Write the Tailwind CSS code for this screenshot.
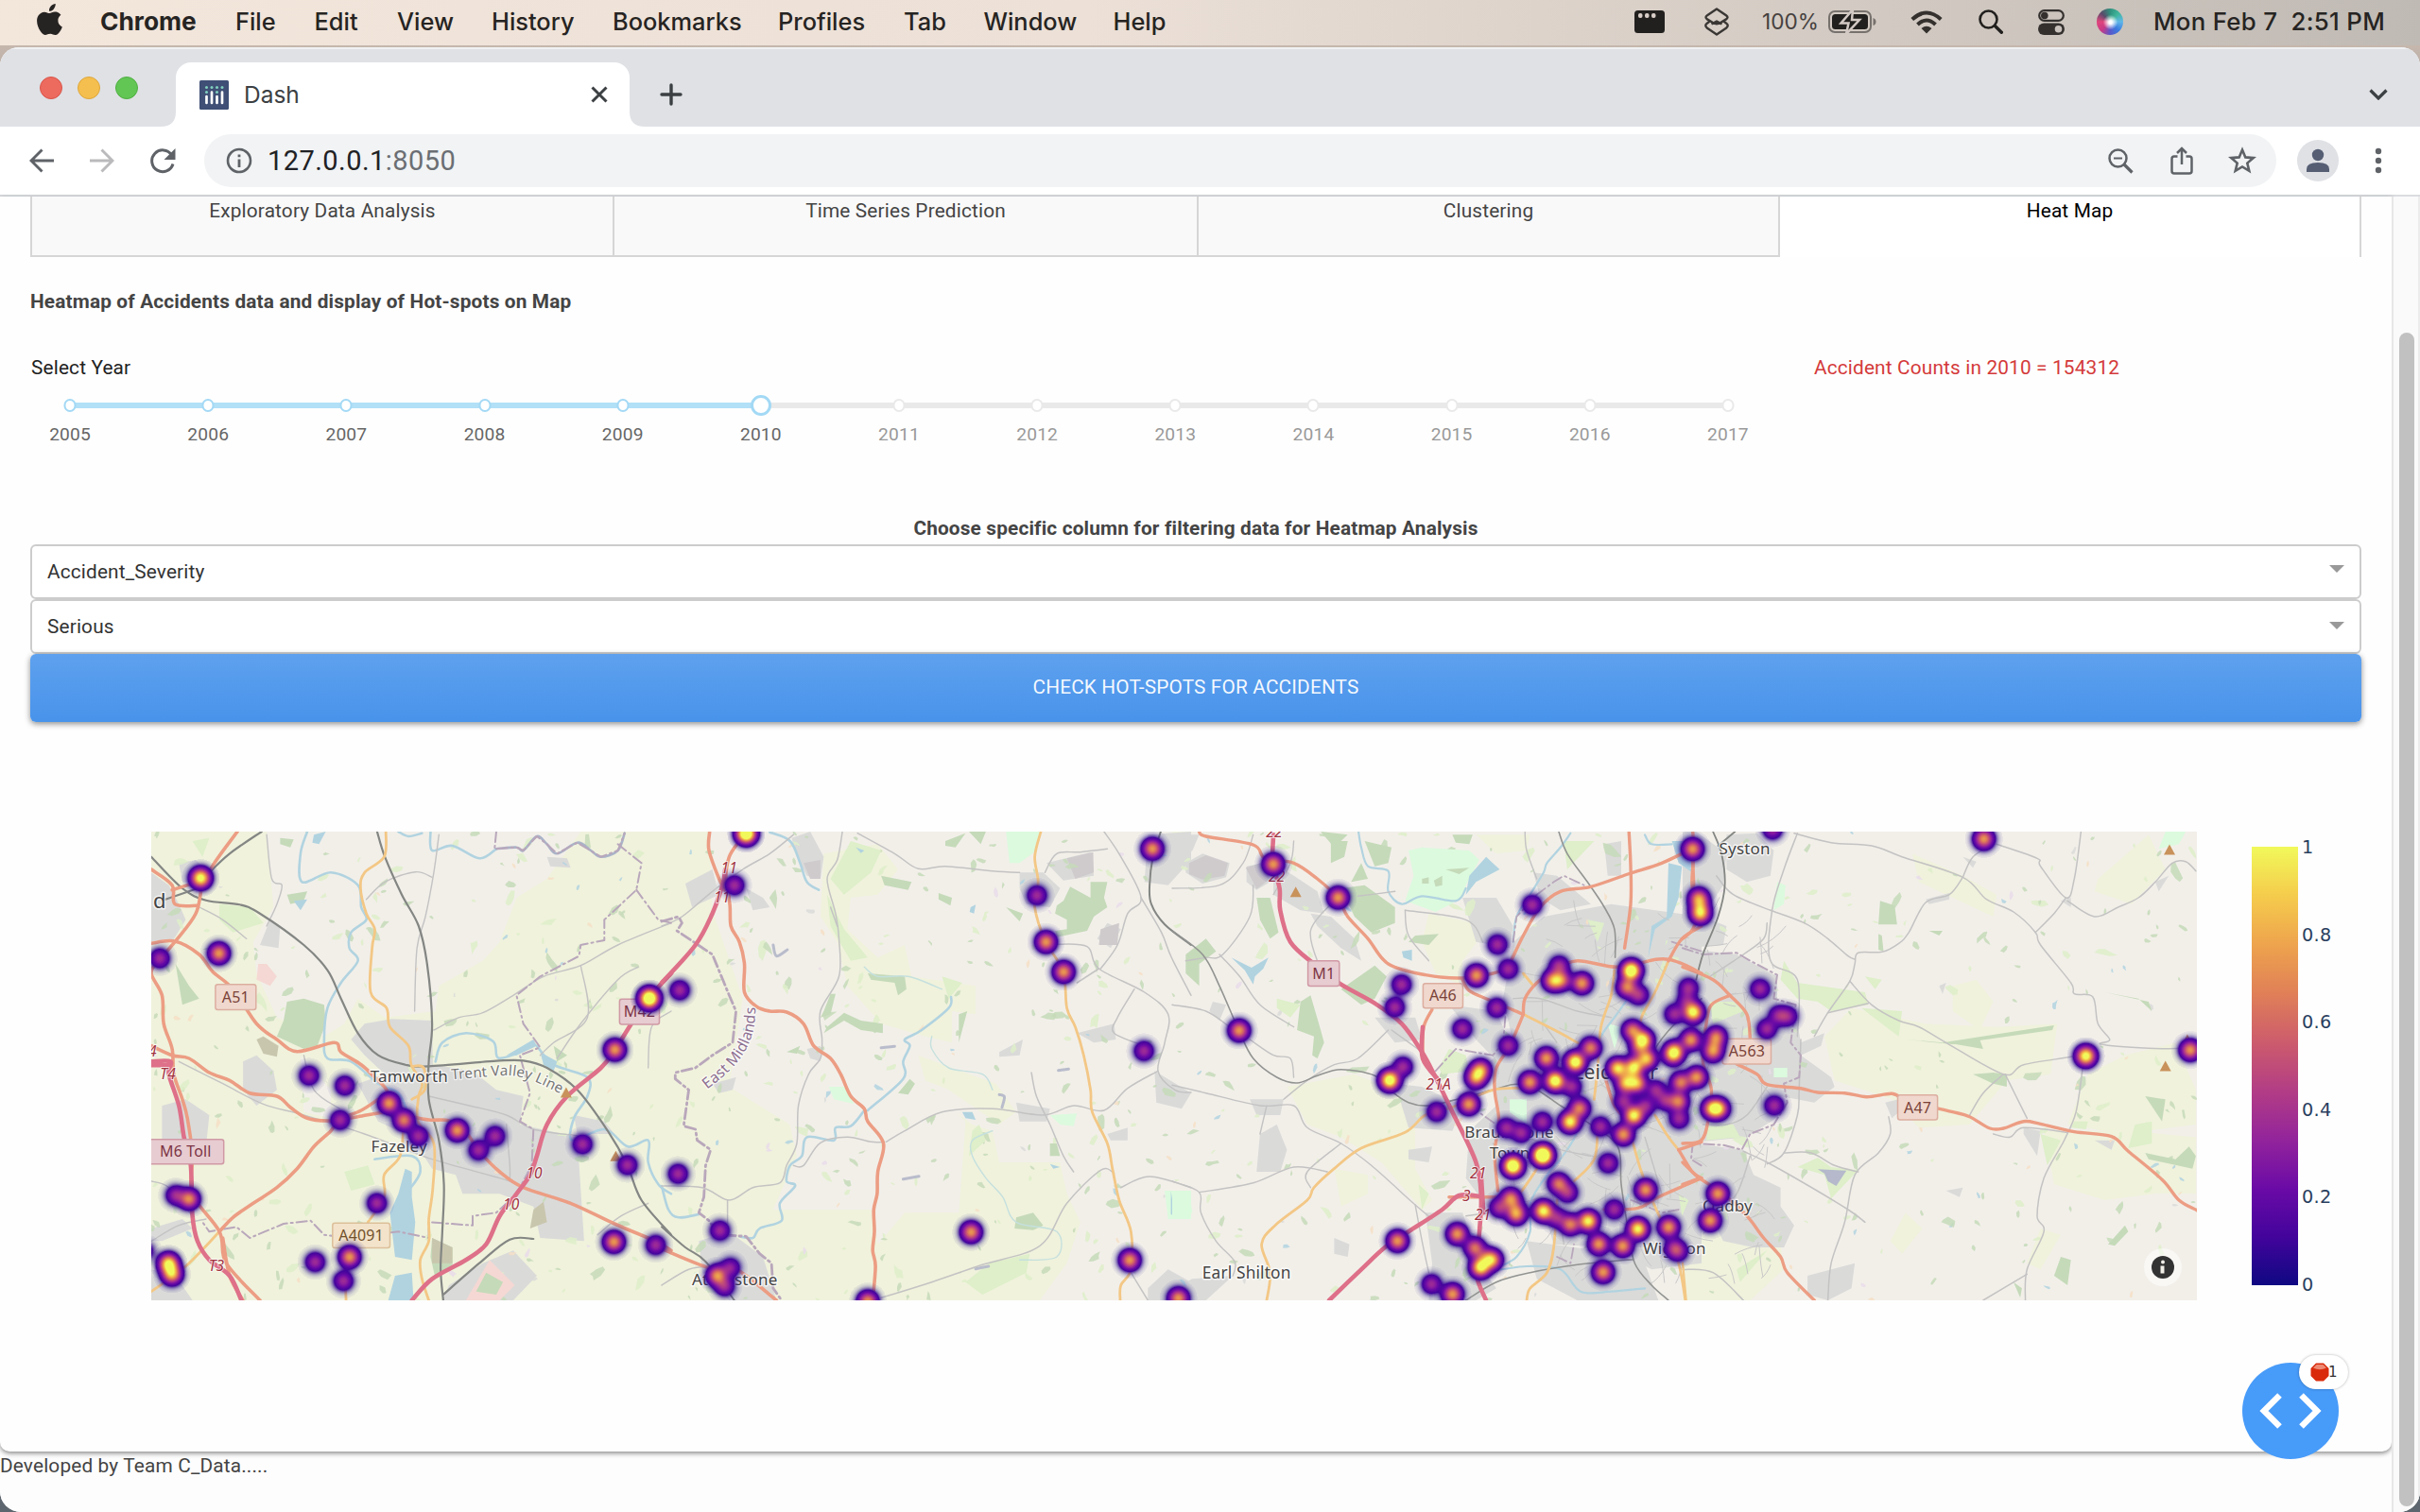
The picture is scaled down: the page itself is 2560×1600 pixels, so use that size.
<!DOCTYPE html>
<html lang="en">
<head>
<meta charset="utf-8">
<title>Dash</title>
<script src="https://cdn.jsdelivr.net/npm/@tailwindcss/browser@4"></script>
</head>
<body class="w-[2560px] h-[1600px] overflow-hidden bg-[#5d666e] font-['Inter',sans-serif] text-[#262422]">
<div class="flex flex-col h-[1600px] bg-linear-to-b from-[#d9c6b8] from-0% via-[#5d666e] via-20% to-[#5d666e]">

  <!-- macOS menu bar -->
  <header class="flex h-12 shrink-0 items-center bg-linear-to-r from-[#f3e6db] via-[#ece0d7] via-45% to-[#c0bab4] text-[25.4px] font-medium leading-[48px] pb-0.5">
    <svg class="ml-[38px] mr-[39px] w-[29px] h-[34px] -mt-1" viewBox="0 0 28 34"><path fill="#262422" d="M20.2 0c.2 2-.6 4-1.8 5.400-1.200 1.400-3 2.500-4.900 2.300-.2-1.900.7-3.900 1.800-5.200C16.500 1.100 18.600.1 20.200 0zM26.400 11.600c-.2.1-3.600 2.100-3.500 6.200 0 4.900 4.300 6.500 4.400 6.600 0 .1-.7 2.300-2.200 4.600-1.400 2-2.800 4-5 4-2.200.1-2.900-1.300-5.400-1.300s-3.300 1.200-5.400 1.300c-2.200.1-3.800-2.200-5.200-4.200C1.200 24.700-.9 17.500 1.900 12.700c1.400-2.400 3.900-3.900 6.600-4 2.100 0 4 1.400 5.300 1.400s3.600-1.700 6.100-1.500c1 0 4 .4 5.900 3.200z"/></svg>
    <span class="w-[143px] font-bold text-[26.3px]">Chrome</span>
    <span class="w-[83.500px]">File</span><span class="w-[87.500px]">Edit</span><span class="w-[100px]">View</span><span class="w-[128px]">History</span><span class="w-[175px]">Bookmarks</span><span class="w-[133px]">Profiles</span><span class="w-[84.500px]">Tab</span><span class="w-[137px]">Window</span><span>Help</span>
    <div class="ml-auto flex items-center pr-[37px]">
      <svg class="w-8 h-6 mr-[41px]" viewBox="0 0 32 24"><rect width="32" height="24" rx="3.500" fill="#22201e"/><g fill="#d8cdc7"><rect x="4" y="3" width="4.500" height="5" rx="2"/><rect x="11" y="3" width="4.500" height="5" rx="2"/><rect x="18" y="3" width="4.500" height="5" rx="2"/></g></svg>
      <svg class="w-7 h-[30px] mr-[34px]" viewBox="0 0 28 30" fill="none" stroke="#3a3734" stroke-width="2.400" stroke-linejoin="round"><path d="M14 1.500 4 8.200Q1 10.300 4 12.400L10 16Q14 18.500 18 16L24 12.400Q27 10.300 24 8.200ZM6.500 14.500 4 16.600Q0.500 19 4 21.800L14 28.500 24 21.800Q27.500 19 24 16.600L21.500 14.500M8.500 17.500 14 14.500 19.500 17.500"/></svg>
      <span class="text-[22.600px] font-normal text-[#45413e] mr-[10px]">100%</span>
      <svg class="w-[51px] h-6 mr-[36px]" viewBox="0 0 51 24"><rect x="1" y="1" width="44" height="22" rx="6" fill="none" stroke="#77716d" stroke-width="2"/><rect x="4" y="4" width="38" height="16" rx="3.500" fill="#22201e"/><path d="M47.500 8v8q3-1 3-4t-3-4z" fill="#77716d"/><path d="M26 -1 13.500 13.500H21.500L19 25 33 10H25z" fill="#22201e" stroke="#d3c9c4" stroke-width="2.500"/></svg>
      <svg class="w-[34px] h-[25px] mr-[38px]" viewBox="0 0 34 25" fill="none" stroke="#33302e" stroke-width="4"><path d="M1.800 9.500Q17-4.500 32.200 9.500M7.500 15Q17 6 26.500 15"/><path d="M17 24.500 11.500 19Q17 14.500 22.500 19z" fill="#33302e" stroke="none"/></svg>
      <svg class="w-[26px] h-[26px] mr-[37px]" viewBox="0 0 26 26" fill="none" stroke="#22201e" stroke-linecap="round"><circle cx="10.500" cy="10.500" r="9" stroke-width="2.600"/><path d="m17.500 17.500 6.800 6.800" stroke-width="3.400"/></svg>
      <svg class="w-7 h-[27px] mr-[34px]" viewBox="0 0 28 27"><rect x="1.200" y="1.200" width="25.600" height="10.600" rx="5.300" fill="none" stroke="#33302e" stroke-width="2.200"/><circle cx="6.800" cy="6.500" r="3.800" fill="#33302e"/><rect y="14.500" width="28" height="12.500" rx="6.200" fill="#33302e"/><circle cx="21.500" cy="20.700" r="3.800" fill="#c9c1bc"/></svg>
      <div class="w-7 h-7 rounded-full mr-[32px] bg-[radial-gradient(circle_at_52%_52%,#fff_0_8%,#ffffff00_38%),conic-gradient(from_0deg,#2f8f7c,#3fb59a,#5fb7e8,#3a7be0,#5b57c8,#c93a86,#e0457c,#5a4b6b,#2f8f7c)]"></div>
      <span class="whitespace-pre text-[25.800px] tracking-[.3px]">Mon Feb 7  2:51 PM</span>
    </div>
  </header>

  <!-- browser window -->
  <div class="mt-0.5 flex flex-col h-[1550px] rounded-t-[20px] rounded-b-[22px] overflow-hidden bg-white">
    <div class="flex h-[84px] shrink-0 bg-[#dfe1e5] border-t-2 border-[#f0f1f3] pt-3.5">
      <div class="flex gap-4 pl-[42px] pt-[15px] w-[186px]">
        <i class="w-6 h-6 rounded-full bg-[#ed6a5f] border border-[#d95549]"></i><i class="w-6 h-6 rounded-full bg-[#f5bf4f] border border-[#dda63a]"></i><i class="w-6 h-6 rounded-full bg-[#62c654] border border-[#4fae41]"></i>
      </div>
      <svg class="w-4 h-4 -ml-4 self-end" viewBox="0 0 16 16"><path d="M16 0V16H0Q16 16 16 0z" fill="#fff"/></svg>
      <div class="flex items-center w-[480px] h-[68px] rounded-t-[16px] bg-white pl-[25px] pr-[23px]">
        <svg class="w-[31px] h-[31px]" viewBox="0 0 31 31"><rect width="31" height="31" rx="1.500" fill="#3f4f75"/><g stroke="#fff" stroke-width="2.700" stroke-linecap="round"><path d="M7.500 17v7M13 12.500V24M18.500 17v7M24 12.500V24"/></g><g fill="#80cfbe"><circle cx="7.500" cy="7.500" r="1.500"/><circle cx="13" cy="7.500" r="1.500"/><circle cx="18.500" cy="7.500" r="1.500"/><circle cx="24" cy="7.500" r="1.500"/><circle cx="7.500" cy="12.500" r="1.500"/><circle cx="18.500" cy="12.500" r="1.500"/></g></svg>
        <span class="ml-4 text-[24.500px] leading-8 text-[#3c4043]">Dash</span>
        <svg class="ml-auto w-[18px] h-[18px]" viewBox="0 0 18 18" stroke="#3c4043" stroke-width="3"><path d="m1.500 1.500 15 15m0-15-15 15"/></svg>
      </div>
      <svg class="w-4 h-4 self-end" viewBox="0 0 16 16"><path d="M0 0V16H16Q0 16 0 0z" fill="#fff"/></svg>
      <svg class="ml-4 mt-[22px] w-6 h-6" viewBox="0 0 24 24" stroke="#3c4043" stroke-width="3.400" stroke-linecap="round"><path d="M12 2v20M2 12h20"/></svg>
      <svg class="ml-auto mr-[34px] mt-[28px] w-5 h-3" viewBox="0 0 20 12" fill="none" stroke="#3c4043" stroke-width="3.200"><path d="m1.500 1.500 8.500 8.500 8.500-8.500"/></svg>
    </div>
    <div class="flex h-[74px] shrink-0 items-center border-b-2 border-[#dadcdf] bg-white">
      <svg class="ml-[31px] w-[26px] h-[26px]" viewBox="0 0 26 26" fill="none" stroke="#5f6368" stroke-width="2.900"><path d="M13.500 1.500 2 13l11.500 11.500M2 13h24"/></svg>
      <svg class="ml-[38px] w-[26px] h-[26px]" viewBox="0 0 26 26" fill="none" stroke="#bababc" stroke-width="2.900"><path d="M12.500 1.500 24 13 12.500 24.500M24 13H0"/></svg>
      <svg class="ml-[37px] w-[28px] h-[28px]" viewBox="0 0 28 28"><path d="M23.600 8A11.400 11.400 0 1 0 25 17.500" fill="none" stroke="#5f6368" stroke-width="3"/><path d="M27.500 1v12h-12z" fill="#5f6368"/></svg>
      <div class="ml-[30px] flex items-center w-[2192px] h-14 rounded-full bg-[#f1f3f4] pl-[23px] pr-[21px]">
        <svg class="w-7 h-7" viewBox="0 0 28 28"><circle cx="14" cy="14" r="12" fill="none" stroke="#5f6368" stroke-width="2.600"/><path d="M12.600 12.500h2.800V21h-2.800zM12.600 7.500h2.800v2.800h-2.800z" fill="#5f6368"/></svg>
        <span class="ml-[16px] font-['Roboto',sans-serif] text-[29px] leading-9 tracking-[.45px] text-[#202124]">127.0.0.1<span class="text-[#6b6e73]">:8050</span></span>
        <svg class="ml-auto w-[27px] h-[27px] mr-[39px]" viewBox="0 0 27 27" fill="none" stroke="#5f6368" stroke-width="2.500"><circle cx="10.500" cy="10.500" r="9"/><path d="m17 17 8.500 8.500" stroke-width="3.200"/><path d="M6 10.500h9" stroke-width="2"/></svg>
        <svg class="w-[24px] h-[30px] mr-[37px] -mt-px" viewBox="0 0 24 30" fill="none" stroke="#5f6368" stroke-width="2.500"><path d="M7.500 10.500H4Q1.500 10.500 1.500 13V26Q1.500 28.500 4 28.500H20Q22.500 28.500 22.500 26V13Q22.500 10.500 20 10.500H16.500M12 19V2.500M7 7l5-5 5 5"/></svg>
        <svg class="w-[30px] h-[30px]" viewBox="0 0 30 30" fill="none" stroke="#5f6368" stroke-width="2.600"><path d="m15 3.500 3.300 7.900 8.500.7-6.500 5.500 2 8.300-7.300-4.400-7.300 4.400 2-8.300-6.500-5.500 8.500-.7z"/></svg>
      </div>
      <svg class="ml-[22px] w-11 h-11" viewBox="0 0 44 44"><circle cx="22" cy="22" r="22" fill="#dfe1e5"/><circle cx="22" cy="16" r="6.200" fill="#555e73"/><path d="M10 34v-3q0-7 12-7t12 7v3z" fill="#555e73"/></svg>
      <svg class="ml-[38px] w-2 h-[28px]" viewBox="0 0 8 28" fill="#5f6368"><circle cx="4" cy="4" r="3.200"/><circle cx="4" cy="14" r="3.200"/><circle cx="4" cy="24" r="3.200"/></svg>
    </div>

    <div class="relative flex grow min-h-0 bg-[#fdfdfd] font-['Roboto',sans-serif] text-[20.800px] tracking-[.16px] leading-8 text-[#444]">
      <main class="w-[2530px] h-full">
        <div class="h-[1328px] rounded-b-[10px] bg-[#fefefe] shadow-[0_2px_5px_rgba(0,0,0,.45)]">
          <!-- tabs -->
          <nav class="ml-8 w-[2466px] h-16 grid grid-cols-[616px_618px_617px_615px] text-center leading-[31px]">
            <div class="border-l-2 border-b-2 border-[#d6d6d6] bg-[#f9f9f9]">Exploratory Data Analysis</div>
            <div class="border-l-2 border-b-2 border-[#d6d6d6] bg-[#f9f9f9]">Time Series Prediction</div>
            <div class="border-x-2 border-b-2 border-[#d6d6d6] bg-[#f9f9f9]">Clustering</div>
            <div class="border-r-2 border-[#d6d6d6] bg-white text-black">Heat Map</div>
          </nav>
          <div class="px-8">
            <h2 class="mt-[31px] font-bold">Heatmap of Accidents data and display of Hot-spots on Map</h2>
            <div class="mt-[38px] flex text-[#222]">
              <div class="w-[1887px] pl-px">
                <div>Select Year</div>
                <div id="slider" class="mt-3 ml-[-32px] w-[1900px] grid grid-cols-13 text-center text-[19.200px]"></div>
              </div>
              <div class="text-[#d43a3a]">Accident Counts in 2010 = 154312</div>
            </div>
            <div class="mt-[67px] text-center font-bold">Choose specific column for filtering data for Heatmap Analysis</div>
            <div class="mt-px flex items-center justify-between h-[58px] rounded-[6px] border-2 border-[#ccc] bg-white pl-4 pr-4 text-[#333]"><span>Accident_Severity</span><svg class="w-4 h-2 -mt-1.5" viewBox="0 0 16 8"><path d="M0 0h16L8 8z" fill="#999"/></svg></div>
            <div class="flex items-center justify-between h-[58px] rounded-[6px] border-2 border-[#ccc] bg-white pl-4 pr-4 text-[#333]"><span>Serious</span><svg class="w-4 h-2 -mt-0.5" viewBox="0 0 16 8"><path d="M0 0h16L8 8z" fill="#999"/></svg></div>
            <button class="block w-full h-[72px] rounded-[6px] bg-linear-to-b from-[#5ea1ee] to-[#4893eb] text-white/95 shadow-[0_2px_6px_rgba(0,0,0,.45)] pb-[3px]">CHECK HOT-SPOTS FOR ACCIDENTS</button>
          </div>
          <!-- map and colour scale -->
          <div class="mt-[116px] ml-[160px] flex">
            <div class="relative w-[2164px] h-[496px] overflow-hidden bg-[#f2efe9]">
              <svg id="base" class="block w-[2164px] h-[496px]" viewBox="0 0 2164 496" fill="none" stroke-linejoin="round" stroke-linecap="round"></svg>
              <canvas id="heat" width="2164" height="496" class="absolute inset-0"></canvas>
              <svg class="absolute right-4 bottom-[15px] w-10 h-10" viewBox="0 0 40 40"><circle cx="20" cy="20" r="20" fill="#fff" fill-opacity=".55"/><circle cx="20" cy="20" r="12" fill="#333"/><circle cx="20" cy="14.500" r="2" fill="#f2efe9"/><path d="M17.500 18.500h4v8h-4z" fill="#f2efe9"/></svg>
            </div>
            <div class="ml-[58px] mt-4 w-[49px] h-[464px] bg-[linear-gradient(to_top,#0f0882,#43049c_11.1%,#6b0aa6_22.2%,#93249b_33.3%,#b33d85_44.4%,#cd5c6c_55.6%,#e08057_66.700%,#eea44d_77.800%,#f5cc4c_88.900%,#f1f95a)]"></div>
            <div class="ml-[4px] mt-px flex flex-col justify-between h-[495px] font-['DejaVu_Sans',sans-serif] text-[19.200px] tracking-[.4px] text-[#2a3f5f]"><span>1</span><span>0.8</span><span>0.6</span><span>0.4</span><span>0.2</span><span>0</span></div>
          </div>
        </div>
        <footer class="-mt-px">Developed by Team C_Data.....</footer>
      </main>
      <div class="w-[28px] border-l-2 border-[#e7e7e7] bg-[#fafafa] pl-1.5 pt-[144px]"><div class="w-4 h-[1242px] rounded-full bg-[#c1c1c1]"></div></div>
      <div class="w-0.5 bg-[#ececec]"></div>
      <!-- dev tools button -->
      <div class="absolute left-[2372px] top-[1234px] w-[102px] h-[102px] rounded-full bg-[#479bf9] flex items-center justify-center">
        <svg class="w-[66px] h-[38px]" viewBox="0 0 66 38" fill="none" stroke="#fff" stroke-width="6.500"><path d="M21.500 2.500 5 19 21.500 35.500M44.500 2.500 61 19 44.500 35.500"/></svg>
        <div class="absolute left-[60px] top-[-8px] w-[52px] h-9 rounded-full bg-white shadow-[0_0_3px_rgba(0,0,0,.3)] flex items-center pl-3">
          <svg class="w-5 h-5" viewBox="0 0 20 20"><path d="M6 .5h8L19.500 6v8L14 19.500H6L.5 14V6z" fill="#d92b0c"/><path d="M6.500 2h7L17 5.500Q10 9 3 5.500z" fill="#ee8a74"/></svg>
          <span class="-ml-px text-[15px] leading-5 font-['DejaVu_Sans',sans-serif] text-[#333]">1</span>
        </div>
      </div>
    </div>
  </div>
</div>

<script>
// Year slider
const slider = document.getElementById('slider');
for (let y = 2005; y <= 2017; y++) {
  const on = y <= 2010, cur = y === 2010;
  const bar = on ? 'bg-[#b2e0f7]' : 'bg-[#e9e9e9]';
  const rBar = y < 2010 ? 'bg-[#b2e0f7]' : 'bg-[#e9e9e9]';
  const dot = cur ? 'w-[22px] h-[22px] border-[3px] border-[#a3d9f5]' : on ? 'w-[13px] h-[14px] border-[2.500px] border-[#a3d9f5]' : 'w-[13px] h-[14px] border-[2.500px] border-[#e9e9e9]';
  slider.insertAdjacentHTML('beforeend',
    `<div><div class="relative flex h-6 items-center"><i class="grow h-1.5 ${y > 2005 ? bar : ''}"></i><i class="grow h-1.5 ${y < 2017 ? rBar : ''}"></i><b class="absolute left-1/2 top-1/2 -translate-1/2 rounded-full bg-white ${dot}"></b></div><div class="mt-[3px] ${on ? 'text-[#666]' : 'text-[#999]'}">${y}</div></div>`);
}

// Base map: four survey sheets, each with its own origin and 2.8 x 3 units per pixel
const ox = {A: -10, B: 540, C: 1080, D: 1620};
const svg = document.getElementById('base');
let out = '';
const pts = (t, s) => s.trim().split(/\s+/).map(p => { const [x, y] = p.split(','); return [ox[t] + x / 2.8, y / 3 - 10]; });
const r = n => n.toFixed(1);
function curve(p) {
  let d = `M${r(p[0][0])} ${r(p[0][1])}`;
  for (let i = 0; i < p.length - 1; i++) {
    const a = p[i - 1] || p[i], b = p[i], c = p[i + 1], e = p[i + 2] || c;
    d += `C${r(b[0] + (c[0] - a[0]) / 6)} ${r(b[1] + (c[1] - a[1]) / 6)} ${r(c[0] - (e[0] - b[0]) / 6)} ${r(c[1] - (e[1] - b[1]) / 6)} ${r(c[0])} ${r(c[1])}`;
  }
  return d;
}
const area = (fill, t, ...list) => list.forEach(s => { out += `<path d="M${pts(t, s).map(p => r(p[0]) + ' ' + r(p[1])).join('L')}Z" fill="${fill}"/>`; });
const line = (color, w, t, ...list) => list.forEach(s => { out += `<path d="${curve(pts(t, s))}" stroke="${color}" stroke-width="${w}"/>`; });
const farm = '#f0f2dc', town = '#dadad9', wood = '#c5dab9', grass = '#deefc9', golf = '#dcfade', water = '#b1d3e0', land = '#f2efe9';

area(farm, 'A', '28,30 1568,30 1568,1520 28,1520');
area(land, 'A', '370,30 1300,30 1200,180 1110,240 1060,380 1010,440 880,520 870,600 720,620 640,560 600,640 540,680 400,620 340,480 330,380 390,270', '470,740 560,850 560,940 480,920');
area(farm, 'B', '0,30 140,30 150,280 240,560 200,840 380,960 400,1060 330,1230 620,1230 640,1340 720,1240 880,1240 900,950 870,920 920,960 980,980 1000,1080 1180,1080 1200,1180 1240,1270 1200,1400 1120,1518 0,1518', '480,100 640,70 700,150 640,230 560,240 550,340 640,430 720,390 740,490 930,520 930,610 860,600 860,700 780,680 650,640 550,520 520,380 470,300', '760,740 860,780 990,830 1050,920 1000,960 850,850 780,820');
area(farm, 'C', '340,840 540,800 680,860 720,960 720,1100 770,1200 740,1230 620,1080 500,1000 400,960', '760,290 940,330 860,440 860,520 780,480 740,380', '0,30 60,30 30,90 0,100', '480,1100 580,1120 580,1180 500,1220', '900,40 1060,40 1050,90 960,100');
area(farm, 'D', '680,100 830,170 930,230 920,300 800,240 700,190', '1230,180 1380,40 1430,150 1330,260 1220,220', '420,680 500,590 720,640 930,650 1110,640 1090,800 960,820 850,960 700,970 620,880 450,820', '800,520 870,500 920,570 880,660 800,600', '1070,980 1320,980 1520,1000 1520,1180 1400,1180 1250,1200 1100,1150', '1200,800 1310,740 1460,700 1520,850 1520,960 1300,990 1140,960', '660,1240 710,1290 650,1370 615,1330', '0,1290 150,1300 290,1340 300,1420 200,1518 0,1518', '1060,1290 1120,1310 1060,1420 1020,1400');

// Towns
area(town, 'A', '28,160 80,200 110,260 130,310 90,380 28,380', '380,310 410,330 405,400 350,390', '660,640 740,625 860,630 862,770 980,790 1050,850 1130,870 1120,960 1290,1000 1310,1330 1180,1320 1160,1220 1060,1180 950,1180 930,1120 860,1100 800,1000 700,950 640,830 720,800 660,740 620,690', '300,760 340,740 390,790 400,850 340,900 300,850', '60,900 130,880 200,930 190,1030 60,1030', '28,1290 120,1260 150,1290 60,1330 28,1330', '28,1420 100,1440 150,1518 28,1518', '910,1470 1010,1400 1100,1360 1170,1440 1100,1518 890,1518', '110,130 160,120 200,160 180,200 120,190', '1200,110 1260,115 1270,145 1210,140', '1280,930 1370,950 1400,990 1290,990');
area(town, 'B', '70,195 150,150 170,230 90,270', '385,50 440,30 480,110 470,180 430,170 400,110', '250,210 300,240 320,270 270,280', '1060,160 1130,160 1180,210 1150,270 1080,260 1060,210', '1140,130 1270,95 1280,170 1190,185', '1440,40 1568,30 1568,120 1500,200 1430,190', '1290,370 1320,320 1360,340 1330,400', '1230,670 1340,640 1345,690 1280,700', '1000,730 1070,690 1060,740 1000,745', '1050,890 1150,910 1140,950 1060,950', '1460,790 1568,860 1540,910 1465,890', '110,1330 200,1300 300,1380 340,1518 200,1518 120,1430', '1440,1480 1500,1420 1568,1460 1568,1518 1440,1518', '1320,990 1380,970 1380,1010 1330,1010', '430,720 470,710 470,760 440,750', '150,830 220,810 210,850 170,860');
area(town, 'C', '0,40 80,40 60,90 0,150', '40,130 90,100 170,130 160,175 90,195 40,160', '220,140 270,130 290,190 250,215 220,190', '300,130 360,170 430,220 450,290 380,280 300,230', '410,290 470,300 540,370 560,440 500,400 430,330', '860,240 960,240 1010,330 1000,400 900,380', '600,620 720,620 740,690 660,700', '230,880 330,880 320,930 250,930', '260,990 310,960 340,1040 320,1110 250,1110', '660,830 740,840 860,900 830,980 700,970', '820,580 960,600 1000,700 980,780 900,690', '700,1040 770,1030 760,1080 700,1070', '1010,380 1100,300 1300,260 1568,300 1568,1400 1420,1420 1300,1350 1130,1340 1100,1230 960,1260 870,1130 880,980 960,900 940,760 1010,700 980,560', '1070,160 1140,170 1240,260 1150,280 1090,240', '750,1240 860,1240 920,1420 960,1480 900,1518 760,1518 770,1400', '480,1320 525,1340 520,1380 480,1370', '120,570 160,580 140,630 110,600', '0,1480 60,1450 180,1440 100,1518 0,1518', '1280,70 1330,60 1330,170 1290,170', '1050,1330 1260,1360 1400,1400 1440,1518 1200,1518 1080,1450');
area('#cfcbcd', 'B', '1200,115 1278,95 1280,160 1225,180', '1300,340 1355,320 1350,390 1295,390', '420,130 470,120 470,180 440,180');
area('#cfcbcd', 'C', '50,130 100,105 165,130 155,170 90,182 50,165', '218,145 262,130 290,180 250,212');
area(town, 'D', '0,30 40,30 130,100 120,200 60,300 130,330 120,390 0,400', '130,40 220,35 270,90 260,170 190,190 130,150', '0,400 160,420 280,490 280,580 340,640 350,700 420,670 410,710 350,740 440,810 450,840 390,890 290,870 290,930 190,1000 0,1020', '30,1020 180,1040 210,1120 290,1160 290,1220 330,1280 300,1350 210,1350 120,1330 50,1180', '720,245 790,225 790,245 730,260', '830,110 870,125 860,145', '1120,250 1150,240 1150,270', '1010,970 1060,980 1050,1060 1010,990', '1220,1010 1280,1010 1270,1040', '370,1440 510,1400 500,1480 430,1518 370,1500', '780,1170 830,1160 820,1190', '1400,190 1440,170 1410,220', '600,890 640,880 640,920 620,940', '760,520 780,510 770,545', '440,1120 485,1110 450,1150');

// Scattered woods, fields and ponds
let seed = 7;
const rnd = () => (seed = (seed * 16807) % 2147483647) / 2147483647;
for (let i = 0; i < 1000; i++) {
  const x = rnd() * 2164, y = rnd() * 496, s = 2 + rnd() * rnd() * 7, k = rnd();
  const fill = k < .5 ? wood : k < .8 ? grass : k < .87 ? '#f6dfc5' : k < .93 ? water : k < .97 ? '#e9dcea' : town;
  if (k >= .8 && s > 4.500) continue;
  const tilt = rnd() * 3.14, ct = Math.cos(tilt), st = Math.sin(tilt);
  let d = '';
  for (let a = 0; a < 7; a++) { const q = s * (.5 + rnd() * .8), u = Math.cos(a * .9) * q * 1.300, v = Math.sin(a * .9) * q * .6; d += `${a ? 'L' : 'M'}${r(x + u * ct - v * st)} ${r(y + u * st + v * ct)}`; }
  out += `<path d="${d}Z" fill="${fill}" fill-opacity=".85"/>`;
}
area(wood, 'A', '430,570 480,560 540,580 545,640 520,710 480,720 400,680 420,630', '860,1320 920,1350 920,1410 870,1450 855,1380', '430,230 490,220 480,250 440,260', '410,50 450,55 440,80 410,70', '1220,710 1260,740 1230,760', '100,450 140,520 170,560 120,580');
area('#c9c6ae', 'A', '340,690 360,680 405,710 400,745 360,735', '1160,1230 1190,1205 1200,1270 1150,1290', '860,1320 920,1350 920,1400 860,1400');
area('#f5d8d3', 'A', '345,450 370,450 400,490 380,520 340,500', '1030,1390 1105,1470 1060,1518 960,1518');
area(wood, 'A', '1020,1430 1070,1460 1050,1500 990,1490');
area(grass, 'A', '230,260 320,270 360,320 270,350 230,310', '150,60 200,50 180,110', '600,1110 670,1090 690,1150 620,1170');
area(water, 'A', '780,1100 800,1110 800,1190 810,1270 800,1390 750,1380 735,1240 760,1180', '750,1440 800,1430 805,1518 730,1518', '1080,740 1160,690 1170,710 1110,740', '510,40 545,30 525,70 505,65', '1180,730 1230,760 1220,790 1190,770', '450,250 490,245 470,280');
area(wood, 'B', '1190,250 1210,205 1270,240 1270,190 1320,190 1310,240 1320,270 1280,300 1260,345 1170,365 1165,345 1200,340 1200,310 1165,290 1170,265', '480,600 500,545 515,545 500,610 470,620', '490,650 540,605 590,630 655,640 655,670 590,660 540,630 480,670', '610,480 720,490 725,530 700,550 690,510 620,500', '840,60 900,35 870,80 840,75', '910,30 960,30 945,70', '1050,1255 1100,1240 1130,1280 1100,1295 1045,1290', '820,225 860,240 855,265 820,245', '1020,270 1070,290 1060,315', '700,860 735,815 750,830 730,865', '650,170 740,190 730,215 660,200', '1150,1020 1170,1020 1180,1060 1150,1060', '370,730 410,710 400,735', '880,610 905,600 880,700');
area(golf, 'B', '1020,30 1120,30 1110,90 1060,130 1030,130', '495,840 540,840 570,895 510,880', '1150,930 1230,925 1220,965 1180,960', '1490,1170 1568,1170 1568,1260 1500,1260');
area(grass, 'B', '560,60 650,90 620,160 540,230 500,180', '490,230 540,340 610,430 560,440 500,330', '940,960 960,1010 910,1060 920,980', '970,1400 1090,1370 1080,1430 950,1500 900,1460', '830,490 890,510 850,560');
area(water, 'B', '915,270 930,262 925,290 912,285', '890,920 920,920 930,945 900,940', '1508,1170 1520,1250 1508,1245', '575,80 600,90 590,98', '1150,1085 1180,1095 1160,1100');
area(golf, 'C', '700,90 740,80 880,90 910,120 870,200 860,240 780,285 690,250 715,170', '0,1170 50,1170 60,1240 20,1260 0,1250', '1000,880 1050,880 1050,960 1000,920', '1290,640 1330,650 1310,720');
area(water, 'C', '930,110 970,150 900,190 870,230 880,170', '175,430 235,462 285,430 270,465 245,490 240,515 215,470', '680,410 710,405 710,440 685,430', '1470,130 1510,140 1500,240 1480,300 1430,340 1410,430 1420,330 1465,300', '1480,60 1560,60 1540,160 1500,130');
area(wood, 'C', '570,60 650,80 640,130 600,140', '540,500 600,455 635,490 600,560 560,580 500,530', '380,570 410,550 440,660 450,700 430,750 415,740 420,680 370,660', '40,420 100,370 130,410 80,450 80,520 40,480', '470,60 520,60 510,110 470,130', '250,240 290,240 315,350 290,370 260,310', '500,210 570,200 660,270 660,320 590,350 540,300', '720,360 790,355 760,390 700,380', '810,150 880,145 850,165', '560,130 580,180 530,190', '830,40 890,40 880,70 840,65', '440,30 520,40 480,80', '740,180 760,175 760,195 740,195', '775,185 800,170 800,200 780,205');
area(grass, 'C', '820,720 870,740 880,790 800,800 790,780', '310,560 380,580 350,620 310,590', '1160,60 1250,60 1170,150', '730,1150 760,1180 740,1230', '1230,310 1280,320 1260,380', '1500,1180 1530,1200 1510,1250');
area(golf, 'D', '280,190 305,200 300,260 270,280', '1430,30 1490,30 1470,70 1410,85', '270,780 310,780 310,810 270,810');
area(grass, 'D', '80,570 150,570 180,600 90,640', '75,950 150,960 170,1000 70,1010', '300,440 340,510 540,540 550,580 440,600 400,570 340,560 290,500', '530,590 650,600 640,680 590,640', '340,1095 400,1065 440,1095 520,1105 440,1195 420,1120', '1340,960 1390,950 1390,1020 1320,1035', '1060,990 1120,1010 1080,1090', '540,490 590,500 570,530', '1160,950 1200,950 1195,975 1150,970', '160,1420 250,1360 170,1460');
area(wood, 'D', '585,250 628,265 635,325 580,325', '580,355 590,360 595,410 580,405', '780,700 880,690 890,720', '1250,540 1380,570 1390,600 1350,560', '860,800 920,795 960,800 960,840 920,830', '1370,1050 1460,1070 1500,1030 1520,1060 1510,1100 1380,1070', '1370,870 1430,880 1420,950', '1120,1380 1150,1390 1140,1470 1100,1440', '980,1460 1005,1480 1000,1510', '660,690 770,700 1100,645 1095,660 800,705', '730,345 770,345 760,360', '1260,1340 1310,1280 1320,1300 1280,1345');
area('#b5b9cb', 'D', '400,1102 485,1106 455,1155 430,1140 420,1115');
line('#b9bccb', 3, 'B', '330,390 340,425 372,405', '650,716 690,712', '1175,788 1205,784', '715,1133 762,1124', '930,1418 968,1410', '1000,865 1015,872 1008,905');

// Rivers
line(water, 2.6, 'A', '490,30 470,100 475,190 560,160 640,200 650,270 665,310 620,350 615,400 640,440 590,510 550,590 540,690 550,750 620,760 700,830 760,860 790,930', '870,760 890,700 960,670 1040,695 1055,748 1110,735', '1170,710 1220,770 1320,810 1320,870 1280,940 1275,1010 1370,975 1440,1030 1500,1010 1500,1080 1530,1150 1568,1180', '855,30 860,90 920,75 1000,115 1050,85', '690,1070 800,1060 825,1110 790,1170', '760,30 790,45 830,35');
line(water, 2.6, 'B', '320,32 380,60 410,130 430,190 465,215', '857,555 850,590 770,660 720,690 735,710 715,760 715,815 610,915', '600,915 560,965 515,970 510,1010 430,1000 415,1060 380,1090 370,1140 395,1155 350,1210 355,1265 290,1290 270,1320 230,1315', '0,1155 20,1230 50,1255 110,1245');
line('#c5e0de', 1.4, 'B', '600,460 640,490 730,490 830,530', '800,680 800,720 850,780 950,800 980,850', '980,980 920,1010 920,1060 960,1130 1010,1190 1050,1270 1170,1300 1170,1380 1060,1390');
line(water, 2.2, 'C', '552,30 560,80 580,140 640,155 640,220 680,260 740,235 840,250 870,210', '1180,35 1150,80 1110,130 1100,160 1060,230 1020,300 1010,380', '1350,560 1310,620 1270,680 1230,780 1190,900 1200,980 1150,1070 1110,1120 1060,1210 1060,1300 1020,1380 960,1420 1050,1410 1150,1420 1210,1490 1300,1490 1400,1480', '1400,40 1420,70 1480,70');

// Local roads
line('#c4c3c3', 1.4, 'A', '370,40 385,180 415,200 400,260 370,330', '880,40 865,160 840,300 815,400 808,600', '665,245 720,190 810,158 860,175', '865,660 940,620 1010,605 1100,550 1190,490 1300,455 1410,390 1568,320', '1300,455 1320,620 1220,700 1180,740', '110,760 240,830 360,895 480,930 660,990 860,1070 1060,1130 1110,1150', '480,740 510,850 586,910', '28,1330 110,1280 190,1260', '850,870 970,900 1080,930 1160,975 1290,995', '1230,750 1300,640 1410,500 1470,460', '1350,1310 1420,1250 1500,1210', '1080,960 1090,1090 1090,1130', '1500,780 1510,650 1568,600', '170,270 240,310 310,370', '28,1140 80,1160 150,1250');
line('#c4c3c3', 1.5, 'B', '535,30 520,120 490,180 515,290 525,370 525,490 470,600 475,690 470,750 435,800 405,900 400,1020 370,1090 350,1145 270,1160 200,1200 120,1160 0,1155', '390,40 320,100 240,150 150,220 60,300 0,330', '580,35 690,100 760,148 840,140 980,155 1060,160', '660,1015 620,1015 550,1000 470,1018 420,1090 390,1090', '665,1015 720,980 830,920 980,910 1130,930 1220,900 1310,915 1380,845 1470,790', '650,1510 800,1460 950,1405 1120,1345 1200,1210 1300,1105 1340,1115', '1360,1160 1445,1125 1568,1160', '1135,160 1170,100 1240,95 1320,85', '1165,388 1260,395 1295,465 1430,540 1500,610 1490,700 1470,790 1520,850 1568,858', '1300,465 1350,390 1380,290 1420,240 1360,110 1310,30', '1420,240 1480,350 1510,430 1568,550', '1230,510 1295,465', '1400,530 1350,620 1340,670 1430,710', '1095,795 1110,870 1150,960 1190,1060 1220,1110', '0,1470 80,1420 150,1410', '195,1200 195,1290', '1390,1430 1440,1518', '500,270 520,330');
line('#c4c3c3', 1.4, 'C', '0,835 100,860 260,900 360,900 400,970 500,1020 590,1090 720,1215 770,1260', '330,880 400,820 480,770 550,750 640,660', '240,40 210,130 140,200 0,210', '240,200 230,300 150,420 100,430 40,440', '140,420 200,490 260,580 360,650', '0,580 100,600 170,650', '230,690 300,740 350,750 360,810', '360,60 350,130 300,230', '480,250 410,345 440,470', '550,235 660,220', '690,280 700,360 760,440', '280,900 260,990', '0,1140 80,1175 85,1240 130,1330 185,1395 180,1440', '80,1175 240,1145 360,1095 460,1110', '500,1020 400,1110 410,1160', '720,1215 740,1330 760,1430', '1045,30 1050,90 1080,180', '780,800 800,850', '740,730 650,660', '1010,560 1090,560 1200,600 1300,620', '1100,640 1140,700', '1050,1000 1150,1040 1240,1060', '950,1020 1000,1080', '1400,1000 1450,1180', '870,1250 940,1240', '1130,1120 1160,1340', '690,280 870,310 920,380');
line('#c4c3c3', 1.5, 'D', '330,35 440,65 560,75 650,110 830,175 900,245 980,285 1045,350 1060,390 1150,510 1160,545 1215,555 1230,640 1265,690 1240,705 1380,718 1480,718', '830,175 860,110 920,70', '830,175 790,230 720,255 670,350 640,385 590,412 520,415 510,450 495,505 430,605 390,680', '340,35 300,150 265,280 260,440 340,500 340,680', '260,280 150,230 100,170', '260,280 360,320 430,370 490,425 510,435', '930,70 1050,115 1060,140 1135,240 1160,180 1180,30', '1140,250 1220,300 1290,270 1350,240 1400,190 1450,130 1490,125 1520,155', '1135,240 1100,290 1045,350', '495,505 560,580 640,630 700,650 780,700 950,800 1010,770 1150,745 1190,735', '430,605 550,575', '950,800 890,860 850,930', '955,800 1020,940', '1185,780 1165,920 1130,1010 1070,1130 1050,1250 1070,1300 1020,1420 1015,1518', '920,990 970,1000 1010,970 1140,985', '610,935 615,990 580,1050 510,1120 480,1270 440,1400 430,1518', '180,1045 250,1080 350,1140 490,1230 540,1270', '890,1518 1020,1435', '350,690 345,850 340,930 300,1050 250,1085', '300,1050 380,1050 450,1090 520,1110', '200,1060 160,1180 100,1240', '250,840 190,930 130,960 60,960', '0,1420 90,1430 180,1518', '250,320 240,370 180,420 80,490');
for (let i = 0; i < 170; i++) {
  const x = 1440 + rnd() * 270, y = 90 + rnd() * 390, a = rnd() * 6.3, l = 12 + rnd() * 26;
  out += `<path d="M${r(x)} ${r(y)}q${r(Math.cos(a) * l * .6)} ${r(Math.sin(a) * l * .3)} ${r(Math.cos(a) * l)} ${r(Math.sin(a) * l)}" stroke="#c9c8c8" stroke-width="1"/>`;
}

// Administrative boundaries
const bound = (w, t, ...l) => l.forEach(s => { out += `<path d="M${pts(t, s).map(p => r(p[0]) + ' ' + r(p[1])).join('L')}" stroke="#b9a7bb" stroke-width="${w}" stroke-dasharray="11 4 2 4"/>`; });
line('#a9b3c8', 2.600, 'A', '1050,85 1110,80 1130,90 1170,45 1200,70 1230,100 1290,65 1330,90 1360,110 1410,90 1430,35');
bound(2, 'A', '1050,30 1045,85 1110,80 1130,90 1170,45 1200,70 1230,100 1290,65 1360,110 1410,90 1430,35', '1410,70 1480,130 1465,215 1370,310 1370,375 1300,390 1295,425 1180,490 1110,550 1130,640 1180,715 1120,740 1150,860 1120,950 1160,975 1155,1090 1110,1180 1050,1240 980,1250 980,1280 850,1270 850,1320 760,1300 620,1320 540,1310 500,1265 420,1275 320,1320 280,1285 200,1300 180,1270', '1465,215 1530,310 1568,320');
bound(2.8, 'B', '0,315 50,300 60,320 45,345 150,420 200,550 220,600 210,700 150,740 100,780 40,795 40,815 80,850 65,965 100,975 105,1010 145,1040 130,1090 125,1190 110,1240 140,1265 170,1310 250,1315 290,1370 325,1400 330,1480 355,1518');
bound(1.8, 'C', '1080,230 1130,190 1160,170 1220,200', '1010,380 1020,300 1080,230', '780,790 840,720 950,740 980,700 990,580', '1480,380 1568,410', '880,900 960,960', '1140,1380 1180,1400 1190,1340', '1360,1200 1450,1240 1500,1230');
bound(2, 'D', '0,400 60,420 160,415 200,440 280,485 270,560 335,580 320,700 350,740 345,810 300,830 310,890 270,960 200,990 175,1040 120,1025 30,1020 25,1070 55,1090');

// Railways
line('#838683', 2.2, 'A', '28,110 120,210 190,248 290,262 350,290 480,390 550,470 590,560 640,670 700,740 780,770 850,775 1050,758 1130,757 1200,780 1290,850 1380,980 1437,1087 1480,1200 1568,1310', '697,30 720,110 770,230 820,330 845,450 860,640 850,760 850,880 880,1010 895,1150 890,1300 885,1420 893,1518', '355,30 260,100 190,170', '180,205 70,245', '893,1500 1000,1400 1090,1325 1160,1323');
line('#838683', 2, 'B', '0,1285 70,1350 130,1395 215,1518', '1478,30 1455,110 1445,200 1450,260 1490,325 1568,390');
line('#929492', 1.6, 'C', '0,345 90,420 140,520 197,660 240,750 310,810 370,828 430,805 500,785 600,805 650,855 700,890 760,900 860,875 950,850 1020,832 1080,850 1150,900 1240,960 1320,1030 1330,1150 1350,1290 1370,1400 1420,1470 1470,1518', '1145,30 1170,100 1230,190 1280,270 1310,340 1312,430', '870,1518 960,1460 1060,1430 1200,1405 1365,1388', '1568,560 1480,650 1430,720 1400,800');
line('#838683', 1.8, 'D', '90,30 115,100 125,200 105,300 60,420 40,500', '155,30 105,75');

// Roads
line('#f3c785', 2.8, 'A', '723,30 718,110 660,160 648,210 665,290 690,340 682,400 678,540 725,590 735,650 790,710 798,770 830,830 820,870 818,950 865,1020 862,1160 850,1260 850,1330 825,1390 830,1450 850,1518', '775,960 765,1060 718,1120 718,1190 670,1270', '600,1400 605,1518', '28,1490 130,1410 230,1300', '800,775 835,780 838,850 800,880');
line('#f3c785', 2.8, 'B', '1123,30 1105,110 1115,190 1105,270 1137,379 1189,474 1200,590 1225,650 1250,740 1270,850 1275,920 1320,1020 1335,1100 1355,1200 1390,1300 1390,1420 1360,1470 1358,1518');
line('#f3c785', 2.8, 'C', '280,1518 290,1430 265,1340 305,1280 400,1200 420,1160 480,1100 560,1035 690,985 750,930 830,905 950,850 1058,845', '1040,610 1150,670 1200,700 1240,720', '1310,470 1300,550 1270,650 1260,780 1250,880', '1470,440 1430,540 1390,620 1380,700', '1360,1000 1390,1110 1430,1220 1460,1290 1500,1400 1520,1518', '1140,1200 1130,1350 1110,1430 1060,1480 1050,1518', '1120,1020 1080,1100 1030,1180', '1260,970 1250,1070 1190,1140', '1040,480 1070,520', '1430,930 1470,1000 1500,1040', '1200,820 1150,780');
line('#f3c785', 2.4, 'D', '0,1400 10,1518');
line('#ec9d83', 3.6, 'A', '283,30 215,130 180,200 160,290 98,380 50,440 28,480 60,550 65,640 90,720 95,800 120,880 135,940 150,1060 150,1180 230,1300 250,1400 350,1518', '28,385 98,378 170,420 210,475 270,530 340,640 400,690 460,728 570,700 590,730 650,770 690,810 725,850 731,891', '28,150 90,200 98,260 165,265', '90,215 150,195', '28,710 90,740 140,750 200,795 260,820 320,860 400,870 440,905 490,940 560,948 640,935 731,920 780,930 850,945 910,948 960,985 1000,1045 1060,1110 1130,1160 1270,1210 1400,1275 1520,1330 1568,1360', '700,880 650,915 586,944 560,980 510,1030 460,1100 400,1160 330,1210 270,1255 230,1300', '240,1320 260,1440 300,1518');
line('#ec9d83', 3.6, 'B', '0,1355 140,1415 200,1410 250,1440 340,1518', '142,30 140,90 170,180 200,250 205,330 230,380 245,450 245,540 280,585 320,600 370,603 420,640 450,710 500,750 530,800 560,870 600,910 610,950 657,1020 640,1110 638,1180 628,1230 630,1300 625,1360 633,1410 625,1518', '230,60 200,110 190,180 200,240');
line('#ec9d83', 3.4, 'C', '80,30 100,45 240,72 275,115 360,130 430,180 490,240 520,300 580,370 640,450 750,485 860,495 950,480 990,465', '860,500 880,535 940,565 1040,610', '770,595 745,650 742,730', '1540,84 1450,130 1350,165 1240,205 1150,220 1090,270 1040,360 1000,450', '1353,30 1358,140 1358,260 1340,400', '1040,610 1045,560 1080,510 1130,470 1200,440 1320,460 1440,435 1500,445 1568,480', '1040,610 1000,710 960,780 955,850 968,950 955,1050 965,1170', '820,1190 960,1190', '1568,330 1510,370 1470,440', '1280,1230 1380,1225 1440,1190 1568,1130', '1500,1040 1568,1015', '1500,1040 1540,1110 1568,1130', '1540,84 1545,200', '1280,800 1310,900 1360,960');
line('#ec9d83', 3.4, 'D', '30,30 33,100 28,200 45,280 30,340 0,370', '0,460 90,500 140,550 190,610 200,690', '140,550 85,580 70,640 60,760 85,850 75,950 55,1010 0,1020', '0,1080 50,1130 120,1180 190,1250 240,1320 290,1380 310,1430 390,1518', '0,1150 50,1130', '160,768 220,800 250,833 350,845 400,858 480,860 545,872 620,862 650,880', '740,905 800,920 850,935 910,972 950,972 1010,950 1060,958 1160,983 1270,998 1320,1045 1420,1135 1470,1200 1523,1232');
line('#de7089', 4.6, 'A', '800,1518 860,1450 960,1390 1020,1340 1060,1250 1110,1180 1150,1120 1170,1060 1200,960 1260,870 1360,780 1400,725 1450,640 1500,560 1568,480', '28,760 85,760 80,800 110,900 125,1000 145,1090 150,1250 165,1330 200,1390 260,1440 295,1518', '28,772 80,772');
line('#de7089', 4.6, 'B', '0,510 100,390 150,290 180,200 188,150');
line('#de7089', 4.6, 'C', '300,40 298,130 318,210 320,280 350,380 420,450 500,515 600,575 680,640 740,730 780,810 830,920 900,1080 915,1190 910,1300 900,1430 930,1518', '915,1188 850,1185 800,1230 700,1300 630,1350 560,1420 465,1518', '742,650 742,750 790,820', '915,1120 922,1240');

// Place names, junction numbers and road shields
const txt = (t, x, y, s, o = {}) => { const [p] = pts(t, x + ',' + y); out += `<text x="${r(p[0])}" y="${r(p[1])}" font-family="Noto Sans" font-size="${o.size || 17}" fill="${o.fill || '#444'}" stroke="#fff" stroke-opacity=".7" stroke-width="${o.halo ?? 3}" paint-order="stroke" ${o.i ? 'font-style="italic"' : ''} text-anchor="${o.a || 'start'}">${s}</text>`; };
txt('A', 34, 272, 'd', {size: 22});
txt('A', 677, 825, 'Tamworth'); txt('A', 679, 1048, 'Fazeley');
txt('B', 90, 1470, 'Atherstone'); txt('C', 89, 1450, 'Earl Shilton', {size: 17.3});
txt('C', 866, 1002, 'Braunstone'); txt('C', 940, 1068, 'Town'); txt('C', 1188, 815, 'Leicester', {size: 21});
txt('C', 1394, 1370, 'Wigston'); txt('D', 108, 101, 'Syston'); txt('D', 59, 1236, 'Oadby');
for (const [t, x, y, s] of [['A', 1138, 1130, '10'], ['A', 1070, 1230, '10'], ['A', 54, 815, 'T4'], ['A', 20, 745, '4'], ['A', 198, 1424, 'T3'], ['B', 175, 163, '11'], ['B', 154, 256, '11'], ['C', 278, 48, '22'], ['C', 286, 188, '22'], ['C', 752, 848, '21A'], ['C', 882, 1132, '21'], ['C', 896, 1262, '21'], ['C', 860, 1203, '3']])
  txt(t, x, y, s, {size: 15.5, fill: '#a1323f', i: 1, halo: 2});
const arc = (id, t, s, text, size, fill) => { out += `<path id="${id}" d="${curve(pts(t, s))}"/><text font-family="Noto Sans" font-size="${size}" fill="${fill}" stroke="#fff" stroke-opacity=".7" stroke-width="2.500" paint-order="stroke"><textPath href="#${id}">${text}</textPath></text>`; };
arc('tvl', 'A', '918,817 1000,810 1080,804 1150,818 1240,862', 'Trent Valley Line', 15.2, '#777');
arc('em', 'B', '135,848 200,790 245,730 272,660 278,590', 'East Midlands', 15.8, '#8d6f91');
for (const [t, x, y, x2, y2, s, k] of [['A', 218, 515, 338, 595, 'A51', 0], ['A', 1415, 562, 1533, 642, 'M42', 1], ['A', 20, 1007, 243, 1085, 'M6 Toll', 1], ['A', 565, 1273, 735, 1352, 'A4091', 2], ['C', 402, 440, 495, 520, 'M1', 1], ['C', 743, 512, 861, 590, 'A46', 0], ['D', 118, 688, 262, 768, 'A563', 0], ['D', 637, 866, 755, 945, 'A47', 0]]) {
  const [a, b] = pts(t, `${x},${y} ${x2},${y2}`);
  out += `<rect x="${r(a[0])}" y="${r(a[1])}" width="${r(b[0] - a[0])}" height="${r(b[1] - a[1])}" rx="2.500" fill="${['#f0d8ce', '#e7ccd1', '#f3e3cb'][k]}" stroke="${['#dcaea0', '#d099a5', '#dcc09a'][k]}" stroke-width="1.500"/>`;
  txt(t, (x + x2) / 2 + (s === 'M6 Toll' ? -2 : 0), (y + y2) / 2 + 17, s, {size: 16, halo: 0, a: 'middle', fill: ['#7a4238', '#7c3444', '#71512a'][k]});
}
for (const [t, x, y] of [['A', 1257, 858], ['A', 1404, 1060], ['C', 366, 221], ['D', 1442, 87], ['D', 1430, 774], ['D', 1495, 690]]) {
  const [p] = pts(t, x + ',' + y); out += `<path d="M${r(p[0])} ${r(p[1] - 5.500)}l6 11h-12z" fill="#c8925a"/>`;
}
svg.innerHTML = out;

const spots = {
A: '173,176,3 52,431,1 227,415,2 494,803,1 600,835,1 586,944,1 731,891,2 775,945,1.8 818,995,1 933,977,2 1045,995,1 996,1040,1 1304,1021,1 1437,1087,1 1400,721,2 1502,558,4 99,1183,1 139,1195,1.9 695,1208,1 512,1395,1 614,1379,2 596,1455,1 1397,1331,2 1521,1341,1 78,1400,2.8 88,1434,2.3 12,1360,.5',
B: '249,35,4 214,199,1 52,532,1 47,1115,1 171,1295,1 163,1438,2 202,1413,.9 185,1472,1 609,1520,2 1452,83,2 1110,231,1 1137,379,2 1189,474,2 1427,725,1 915,1300,2 1385,1389,2 1529,1510,2',
C: '298,132,2 490,238,2 1065,261,1 962,387,1 900,485,2 994,465,1 678,514,1 658,586,1 960,588,1 858,655,1 197,660,2 994,708,1 682,775,1 643,818,3.3 912,785,2 898,810,2 877,894,2 782,918,1 1145,455,1.1 1126,502,2 1152,500,1.6 1212,510,2 1358,470,3.6 1346,522,1.8 1380,547,1.1 1540,84,2 1528,525,1 1542,602,2.9 1486,608,1 1522,568,.8 1362,660,1.8 1393,690,2.8 1380,715,1 1404,750,2.3 1318,780,2.6 1367,775,2.5 1342,828,2.1 1376,828,2.1 1355,800,.6 1336,885,1 1400,900,1 1366,930,2.8 1335,990,2 1432,850,1 1460,882,1 1498,885,1.8 1500,940,1 1505,825,1.8 1552,808,2 1487,726,2 1481,738,1.5 1535,690,2 1238,715,1.8 1193,760,3.2 1107,748,2 1058,824,2 1133,820,3.2 1182,838,1 1205,907,1.8 1177,950,2.8 1095,950,1 988,969,1 1033,985,1 1267,965,1 1096,1056,4.6 1008,1090,3.8 1290,1081,1 1143,1146,1.7 1170,1174,1.1 1001,1193,1.8 1018,1243,2 1014,1218,.5 968,1222,1.1 1098,1233,2.8 1138,1255,1 1178,1276,1.8 1231,1265,2.8 1308,1228,1 1401,1166,2 1378,1290,2.8 1469,1284,2 1262,1338,2 1333,1344,2 1485,1350,.9 1498,1362,.8 1275,1427,2 666,1328,2 843,1306,2 895,1350,1.7 912,1412,2.8 945,1388,2.300 925,1380,.7 767,1465,1 829,1497,2',
D: '265,22,1 891,52,2 46,240,1.8 51,260,.7 51,288,2.5 228,528,1 282,612,.9 310,615,.9 248,655,1 98,680,1.7 88,727,1.8 93,705,.5 270,898,1 86,908,2.100 106,908,2.100 1193,741,3 1502,722,2 103,1178,2 80,1263,2'};
const W = 2164, H = 496, dens = new Float32Array(W * H);
for (const t in spots) spots[t].split(' ').forEach(s => {
  const [px, py, n] = s.split(',').map(Number), x = ox[t] + px / 2.8, y = py / 3 - 10;
  for (let j = Math.max(0, y - 20 | 0); j < Math.min(H, y + 21); j++)
    for (let i = Math.max(0, x - 20 | 0); i < Math.min(W, x + 21); i++) {
      const q = (i - x) ** 2 + (j - y) ** 2;
      if (q < 400) dens[j * W + i] += n * .365 * Math.exp(-q / 78);
    }
});
const ramp = [[15, 8, 130], [67, 4, 156], [107, 10, 166], [147, 36, 155], [179, 61, 133], [205, 92, 108], [224, 128, 87], [238, 164, 77], [245, 204, 76], [241, 249, 90]];
const ctx = document.getElementById('heat').getContext('2d'), img = ctx.createImageData(W, H);
for (let i = 0; i < W * H; i++) {
  const v = Math.min(.9999, dens[i]); if (v < .004) continue;
  const k = Math.floor(v * 9), f = v * 9 - k;
  for (let c = 0; c < 3; c++) img.data[i * 4 + c] = ramp[k][c] + (ramp[k + 1][c] - ramp[k][c]) * f;
  img.data[i * 4 + 3] = 255 * Math.min(1, v * 9);
}
ctx.putImageData(img, 0, 0);
</script>
</body>
</html>
